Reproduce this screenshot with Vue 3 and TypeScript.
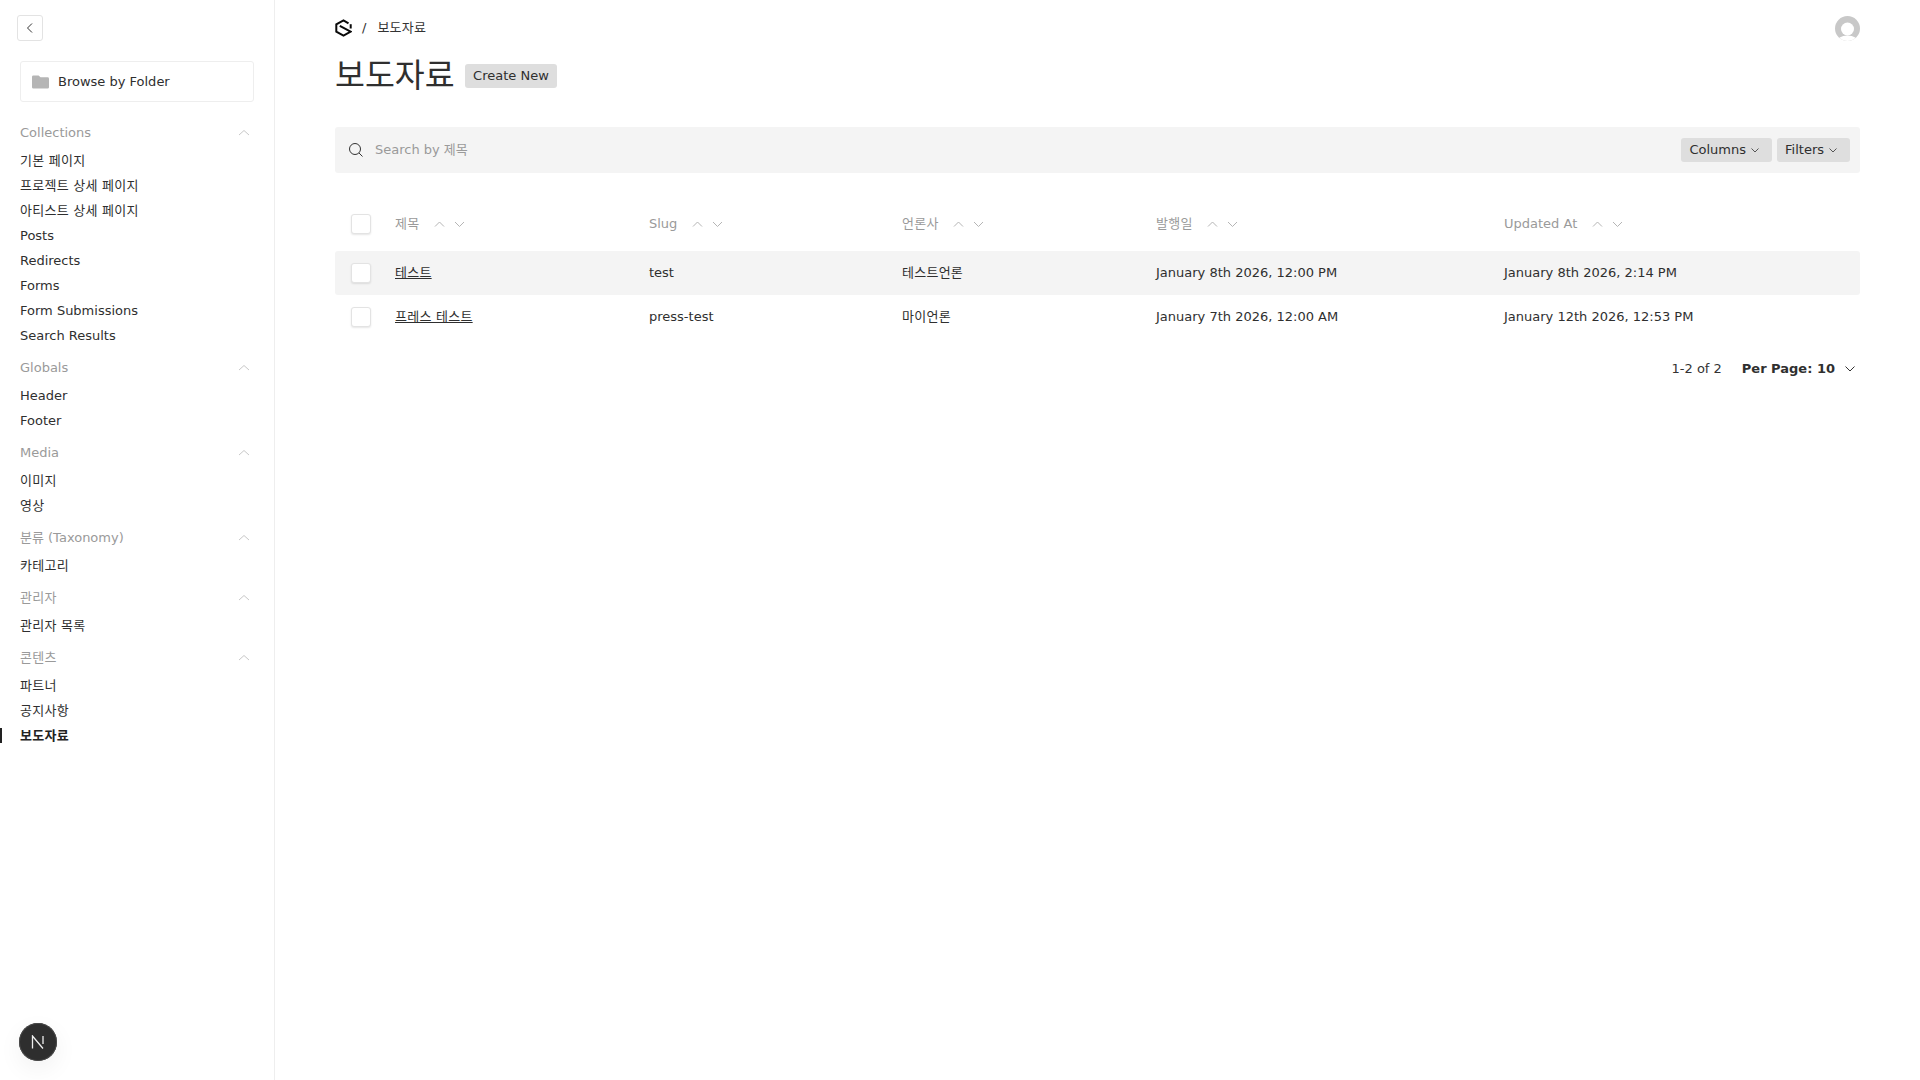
<script setup lang="ts">
interface Group { label: string; items: string[] }
const groups: Group[] = [
  { label: 'Collections', items: ['기본 페이지', '프로젝트 상세 페이지', '아티스트 상세 페이지', 'Posts', 'Redirects', 'Forms', 'Form Submissions', 'Search Results'] },
  { label: 'Globals', items: ['Header', 'Footer'] },
  { label: 'Media', items: ['이미지', '영상'] },
  { label: '분류 (Taxonomy)', items: ['카테고리'] },
  { label: '관리자', items: ['관리자 목록'] },
  { label: '콘텐츠', items: ['파트너', '공지사항', '보도자료'] },
]
const active = '보도자료'
const columns = ['제목', 'Slug', '언론사', '발행일', 'Updated At']
const rows = [
  ['테스트', 'test', '테스트언론', 'January 8th 2026, 12:00 PM', 'January 8th 2026, 2:14 PM'],
  ['프레스 테스트', 'press-test', '마이언론', 'January 7th 2026, 12:00 AM', 'January 12th 2026, 12:53 PM'],
]
const isKo = (s: string): boolean => /^[가-힣 ]+$/.test(s)
</script>

<template>
  <div class="shell">
    <aside class="side">
      <button class="collapse" aria-label="Collapse">
        <svg width="12" height="12" viewBox="0 0 12 12"><path d="M8 1.500 3.500 6 8 10.500" fill="none" stroke="#333" stroke-width="1" /></svg>
      </button>
      <div class="browse">
        <svg width="17" height="14" viewBox="0 0 18 14"><path d="M1.500 0H7l2 2h7.500A1.500 1.500 0 0 1 18 3.500v9a1.500 1.500 0 0 1-1.500 1.500h-15A1.500 1.500 0 0 1 0 12.500v-11A1.500 1.500 0 0 1 1.500 0Z" fill="#b5b5b5" /></svg>
        <span>Browse by Folder</span>
      </div>
      <section v-for="g in groups" :key="g.label" class="group">
        <div class="group-head">
          <span :class="{ ko: isKo(g.label) }">{{ g.label }}</span>
          <svg width="12" height="8" viewBox="0 0 12 8"><path d="M1 6 6 1.500 11 6" fill="none" stroke="#c8c8c8" stroke-width="1" /></svg>
        </div>
        <a v-for="i in g.items" :key="i" class="item" :class="{ active: i === active, ko: isKo(i) }">{{ i }}</a>
      </section>
    </aside>

    <main class="main">
      <div class="crumbs">
        <div class="crumb-left">
          <svg class="logo" width="17" height="18" viewBox="0 0 17 18">
            <path d="M13.500 4.300 8.500 1.300 1.300 5.400V12.600L8.500 16.700 15.700 12.600 4.800 6.800" fill="none" stroke="#0a0a0a" stroke-width="2" />
            <path d="M15.700 5.200V9.500" fill="none" stroke="#0a0a0a" stroke-width="2" />
          </svg>
          <span class="slash">/</span>
          <span class="crumb ko">보도자료</span>
        </div>
        <svg class="avatar" width="25" height="25" viewBox="0 0 25 25">
          <defs><clipPath id="av"><circle cx="12.500" cy="12.500" r="12.500" /></clipPath></defs>
          <circle cx="12.500" cy="12.500" r="12.500" fill="#c8c8c8" />
          <circle cx="12.500" cy="13" r="6.500" fill="#fff" />
          <ellipse cx="12.500" cy="26" rx="11" ry="6.500" fill="#fff" clip-path="url(#av)" />
        </svg>
      </div>

      <div class="title-row">
        <h1>보도자료</h1>
        <button class="pill">Create New</button>
      </div>

      <div class="search">
        <svg width="16" height="16" viewBox="0 0 16 16"><circle cx="7" cy="7" r="5.500" fill="none" stroke="#333" stroke-width="1" /><path d="m11 11 3.500 3.500" stroke="#333" stroke-width="1" /></svg>
        <span class="placeholder">Search by 제목</span>
        <button class="pill small">Columns <svg width="8" height="5" viewBox="0 0 8 5"><path d="M.5.500 4 4 7.500.5" fill="none" stroke="#555" stroke-width="1" /></svg></button>
        <button class="pill small">Filters <svg width="8" height="5" viewBox="0 0 8 5"><path d="M.5.500 4 4 7.500.5" fill="none" stroke="#555" stroke-width="1" /></svg></button>
      </div>

      <div class="table">
        <div class="row head">
          <span class="check" />
          <div v-for="c in columns" :key="c" class="th">
            <span :class="{ ko: isKo(c) }">{{ c }}</span>
            <svg class="sort" width="32" height="10" viewBox="0 0 32 10">
              <path d="M1 7.500 5.500 3 10 7.500M21 3l4.500 4.500L30 3" fill="none" stroke="#b5b5b5" stroke-width="1" />
            </svg>
          </div>
        </div>
        <div v-for="(r, ri) in rows" :key="ri" class="row body" :class="{ odd: ri === 0 }">
          <span class="check" />
          <div v-for="(v, ci) in r" :key="ci" class="td" :class="{ ko: isKo(v) }"><a v-if="ci === 0" class="link">{{ v }}</a><template v-else>{{ v }}</template></div>
        </div>
      </div>

      <div class="pager">
        <span>1-2 of 2</span>
        <strong>Per Page: 10</strong>
        <svg width="10" height="6" viewBox="0 0 10 6"><path d="M.5.500 5 5 9.500.5" fill="none" stroke="#333" stroke-width="1" /></svg>
      </div>
    </main>

    <div class="devtool">
      <svg width="14" height="14" viewBox="0 0 14 14"><path d="M1.500 13.500V1l10.500 12.500M12 1v8" fill="none" stroke="#eee" stroke-width="1.300" /></svg>
    </div>
  </div>
</template>

<style>
html, body { margin: 0; background: #fff; }
</style>

<style scoped>
.shell {
  position: relative;
  display: flex;
  height: 1080px;
  overflow: hidden;
  font-family: "DejaVu Sans", "Noto Sans CJK KR", sans-serif;
  font-size: 13px;
  line-height: 20px;
  color: #2f2f2f;
  background: #fff;
}
.ko { letter-spacing: .25px; }
.side {
  box-sizing: border-box;
  width: 275px;
  flex: none;
  padding: 15px 20px 0;
  border-right: 1px solid #eee;
}
.collapse {
  display: flex;
  align-items: center;
  justify-content: center;
  box-sizing: border-box;
  width: 26px;
  height: 26px;
  margin-left: -3px;
  padding: 0;
  background: #fff;
  border: 1px solid #e3e3e3;
  border-radius: 3px;
}
.browse {
  display: flex;
  align-items: center;
  gap: 9px;
  box-sizing: border-box;
  width: 234px;
  height: 41px;
  margin-top: 20px;
  padding: 0 11px;
  border: 1px solid #eee;
  border-radius: 3px;
}
.group { margin-top: 4px; }
.browse + .group { margin-top: 15px; }
.group-head {
  display: flex;
  align-items: center;
  justify-content: space-between;
  box-sizing: border-box;
  height: 31px;
  padding-right: 4px;
  color: #9a9a9a;
}
.item {
  display: block;
  height: 25px;
  line-height: 25px;
  color: #2f2f2f;
  white-space: nowrap;
}
.item.active { position: relative; font-weight: 700; color: #222; }
.item.active::before {
  content: "";
  position: absolute;
  left: -20px;
  top: 5px;
  width: 2px;
  height: 15px;
  background: #222;
}
.main {
  box-sizing: border-box;
  flex: 1;
  padding: 0 60px;
}
.crumbs {
  display: flex;
  align-items: center;
  justify-content: space-between;
  height: 55px;
}
.avatar { margin-top: 1px; }
.crumb-left { display: flex; align-items: center; }
.logo { margin-right: 10px; }
.slash { margin-right: 11px; }
.crumb { color: #333; }
.title-row {
  display: flex;
  align-items: center;
  gap: 10.500px;
  height: 36px;
  margin-top: 3px;
}
h1 {
  margin: 0;
  font-size: 32.500px;
  font-weight: 400;
  line-height: 36px;
}
.pill {
  display: inline-flex;
  align-items: center;
  height: 24px;
  padding: 0 8px;
  border: 0;
  border-radius: 3px;
  background: #dedede;
  color: #2f2f2f;
  font: inherit;
}
.small svg { margin-left: 5px; margin-right: 5px; }
.search {
  display: flex;
  align-items: center;
  gap: 5px;
  height: 46px;
  margin-top: 33px;
  padding: 0 10px 0 13px;
  background: #f4f4f4;
  border-radius: 3px;
}
.placeholder {
  flex: 1;
  margin-left: 6px;
  color: #9a9a9a;
}
.table { margin-top: 28px; }
.row {
  display: grid;
  grid-template-columns: 60px 254px 253px 254px 348px 1fr;
  align-items: center;
  height: 44px;
  border-radius: 3px;
}
.row.head { height: 46px; margin-bottom: 4px; color: #9a9a9a; }
.row.odd { background: #f4f4f4; }
.check {
  display: block;
  box-sizing: border-box;
  width: 20px;
  height: 20px;
  margin-left: 16px;
  background: #fff;
  border: 1px solid #e3e3e3;
  border-radius: 3px;
  box-shadow: 0 1px 2px rgba(0, 0, 0, .1);
}
.th { display: flex; align-items: center; gap: 14.500px; }
.link { text-decoration: underline; color: #2f2f2f; }
.pager {
  display: flex;
  align-items: center;
  justify-content: flex-end;
  height: 60px;
  padding-right: 5px;
  color: #333;
}
.pager strong { margin-left: 20px; margin-right: 10px; color: #2f2f2f; }
.devtool {
  position: absolute;
  left: 19px;
  top: 1023px;
  display: flex;
  align-items: center;
  justify-content: center;
  width: 38px;
  height: 38px;
  border-radius: 50%;
  background: #2e2e2e;
  box-shadow: inset 0 0 0 1px #4a4a4a, 0 8px 24px rgba(0, 0, 0, .06);
}
</style>
